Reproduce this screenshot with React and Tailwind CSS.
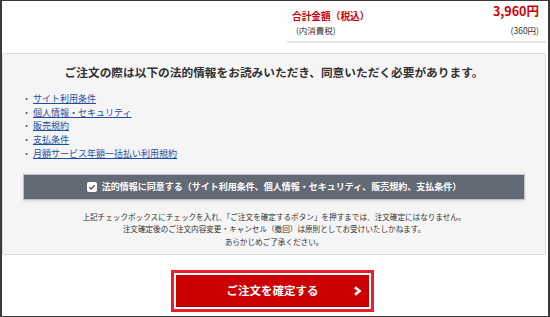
import React from 'react';

const links = [
  'サイト利用条件',
  '個人情報・セキュリティ',
  '販売規約',
  '支払条件',
  '月額サービス年額一括払い利用規約',
];

export default function App() {
  return (
    <div
      className="w-[550px] h-[317px] bg-white border-[#3a3a3a] border-t border-b border-l-2 border-r-2 overflow-hidden text-[#333]"
      style={{ fontFamily: '"Noto Sans CJK JP", "Noto Sans", sans-serif' }}
    >
      {/* 合計金額 */}
      <div className="flex justify-end pr-[2px]">
        <div className="w-[259px] h-[42px] border-b-2 border-[#e6e6e6] pl-[5px] pr-[7px]">
          <div className="flex justify-between items-start">
            <span className="mt-[9px] text-[9.7px] leading-[12px] font-bold text-[#cc0000]">合計金額（税込）</span>
            <span className="mt-[2px] text-[12.5px] leading-[16px] font-bold text-[#cc0000]">3,960円</span>
          </div>
          <div className="flex justify-between mt-[2px] text-[8.5px] leading-[12px] text-[#333]">
            <span className="pl-[4px]">(内消費税)</span>
            <span>(360円)</span>
          </div>
        </div>
      </div>

      {/* 法的情報 */}
      <div className="mt-[10px] mr-[2px] h-[202px] bg-[#f5f5f5] border border-[#dcdcdc] rounded-[2px]">
        <p className="pt-[10px] text-center text-[11.7px] leading-[16px] font-bold text-[#333]">
          ご注文の際は以下の法的情報をお読みいただき、同意いただく必要があります。
        </p>
        <ul className="mt-[12px] pl-[19px] text-[9px] leading-[13.7px]">
          {links.map((l) => (
            <li key={l} className="flex items-center">
              <span className="w-[11px] text-[#555]">・</span>
              <a href="#" className="text-[#1d4fa0] underline">{l}</a>
            </li>
          ))}
        </ul>
        <label className="mt-[13px] mx-[20px] h-[26px] bg-[#646a75] border border-white/60 shadow-sm flex items-center justify-center gap-[5px] text-white">
          <span className="w-[10px] h-[10px] bg-white rounded-[2px] flex items-center justify-center">
            <svg width="8" height="8" viewBox="0 0 8 8">
              <polyline points="1.3,4.2 3.1,6 6.7,2.2" fill="none" stroke="#555b66" strokeWidth="1.5" />
            </svg>
          </span>
          <span className="text-[9px] font-bold leading-[12px]">
            法的情報に同意する（サイト利用条件、個人情報・セキュリティ、販売規約、支払条件）
          </span>
        </label>
        <div className="mt-[11px] text-center text-[7.6px] leading-[12.5px] text-[#333]">
          <p>上記チェックボックスにチェックを入れ、「ご注文を確定するボタン」を押すまでは、注文確定にはなりません。</p>
          <p>注文確定後のご注文内容変更・キャンセル（撤回）は原則としてお受けいたしかねます。</p>
          <p>あらかじめご了承ください。</p>
        </div>
      </div>

      {/* 確定ボタン */}
      <div className="flex justify-center pr-[5px] mt-[20px]">
        <button className="relative w-[193px] h-[32px] bg-[#cc0000] text-white text-[11.5px] font-bold outline-[3px] outline-solid outline-[#e8202a] outline-offset-[2px] shadow-[inset_0_-1px_0_rgba(0,0,0,0.25)]">
          ご注文を確定する
          <svg className="absolute right-[7px] top-[11px]" width="9" height="10" viewBox="0 0 9 10">
            <polyline points="2,1.2 6.5,5 2,8.8" fill="none" stroke="#fff" strokeWidth="2.6" />
          </svg>
        </button>
      </div>
    </div>
  );
}
